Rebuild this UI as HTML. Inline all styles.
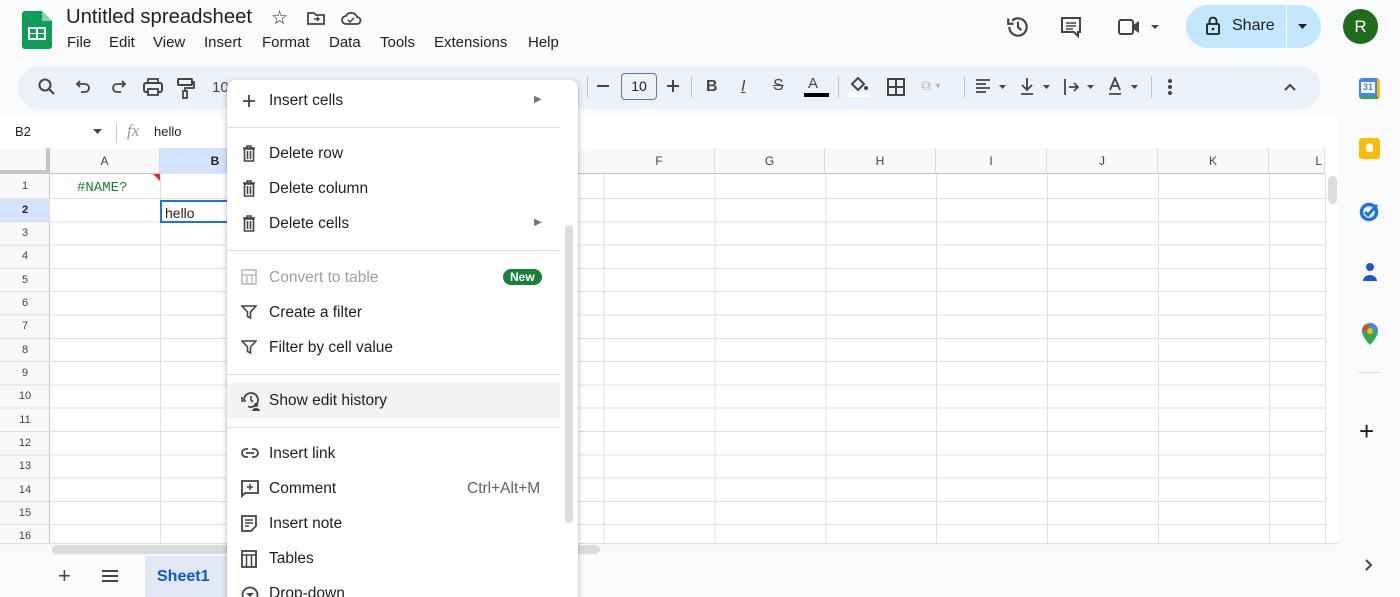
<!DOCTYPE html>
<html style="width:1400px;height:597px;overflow:hidden"><head><meta charset="utf-8"><style>
*{box-sizing:border-box;margin:0;padding:0}
body{width:1400px;height:597px;overflow:hidden;background:#f9fbfd;font-family:"Liberation Sans",Arial,sans-serif;position:relative;color:#1f1f1f}
.a{position:absolute}
.menu span{position:absolute;font-size:15.5px;color:#1f1f1f}
.ic{position:absolute;left:241px}
.col{position:absolute;top:148px;height:26px;font-size:12px;color:#444;text-align:center;line-height:26px;border-right:1px solid #dadce0}
.rn{position:absolute;left:0;width:50px;font-size:11px;color:#444;text-align:center}
</style></head><body>
<svg class="a" style="left:22px;top:11px" width="30" height="38" viewBox="0 0 30 38"><path d="M3 0h17l10 10v25a3 3 0 0 1-3 3H3a3 3 0 0 1-3-3V3a3 3 0 0 1 3-3z" fill="#0f9d58"/><path d="M20 0v10h10z" fill="#87ceac"/><rect x="6" y="16" width="18" height="13" fill="#fff"/><rect x="8" y="18" width="6" height="4" fill="#0f9d58"/><rect x="16" y="18" width="6" height="4" fill="#0f9d58"/><rect x="8" y="23" width="6" height="4" fill="#0f9d58"/><rect x="16" y="23" width="6" height="4" fill="#0f9d58"/></svg>
<div class="a" style="left:66px;top:6px;font-size:20.3px;color:#1f1f1f">Untitled spreadsheet</div>
<div class="a" style="left:271px;top:7px;font-size:19px">☆</div>
<svg class="a" style="left:306px;top:10px" width="20" height="16"><path d="M2 3h6l2 2h8v9H2z" fill="none" stroke="#444" stroke-width="1.8"/><path d="M8 9h5M11 7l2 2-2 2" stroke="#444" fill="none" stroke-width="1.5"/></svg>
<svg class="a" style="left:340px;top:10px" width="22" height="16"><path d="M6 14a4 4 0 0 1 0-8 6 6 0 0 1 11 1 3.5 3.5 0 0 1 0 7z" fill="none" stroke="#444" stroke-width="1.8"/><path d="M8 10l2 2 4-4" stroke="#444" fill="none" stroke-width="1.5"/></svg>
<div class="a" style="left:67px;top:34px;font-size:15px;word-spacing:0">
<span class="a" style="left:0">File</span><span class="a" style="left:42px">Edit</span><span class="a" style="left:86px">View</span><span class="a" style="left:137px">Insert</span><span class="a" style="left:195px">Format</span><span class="a" style="left:262px">Data</span><span class="a" style="left:313px">Tools</span><span class="a" style="left:367px">Extensions</span><span class="a" style="left:461px">Help</span></div>
<svg class="a" style="left:1005px;top:14px" width="26" height="26" viewBox="0 0 24 24"><path d="M4 12a8 8 0 1 0 2.5-5.8" fill="none" stroke="#444" stroke-width="2"/><path d="M3 4v5h5" fill="none" stroke="#444" stroke-width="2"/><path d="M12 7v5l3 3" fill="none" stroke="#444" stroke-width="2"/></svg>
<svg class="a" style="left:1059px;top:15px" width="24" height="24" viewBox="0 0 24 24"><path d="M3 3h18v14h-2v4l-4-4H3z" fill="none" stroke="#444" stroke-width="2"/><path d="M7 8h10M7 11h10M7 14h7" stroke="#444" stroke-width="1.6"/></svg>
<svg class="a" style="left:1117px;top:16px" width="46" height="22"><rect x="2" y="4" width="14" height="14" rx="2" fill="none" stroke="#444" stroke-width="2"/><path d="M16 9l6-4v12l-6-4z" fill="#444"/><path d="M34 9h8l-4 4z" fill="#444"/></svg>
<div class="a" style="left:1186px;top:5px;width:135px;height:43px;border-radius:22px;background:#c2e7ff"></div>
<div class="a" style="left:1286px;top:5px;width:1px;height:43px;background:#f9fbfd"></div>
<svg class="a" style="left:1204px;top:16px" width="18" height="20"><rect x="3" y="8" width="12" height="10" rx="1" fill="none" stroke="#1f1f1f" stroke-width="1.8"/><path d="M5.5 8V5a3.5 3.5 0 0 1 7 0v3" fill="none" stroke="#1f1f1f" stroke-width="1.8"/><circle cx="9" cy="13" r="1.3" fill="#1f1f1f"/></svg>
<div class="a" style="left:1232px;top:17px;font-size:16px;color:#1f1f1f">Share</div>
<svg class="a" style="left:1297px;top:23px" width="12" height="8"><path d="M1 1h9l-4.5 5z" fill="#1f1f1f"/></svg>
<div class="a" style="left:1343px;top:9px;width:35px;height:35px;border-radius:50%;background:#1e6b1c;color:#fff;font-size:17px;text-align:center;line-height:35px">R</div>
<div class="a" style="left:18px;top:66px;width:1303px;height:43px;border-radius:22px;background:#edf2fa"></div>
<svg class="a" style="left:37px;top:77px" width="20" height="20"><circle cx="8" cy="8" r="5.5" fill="none" stroke="#444" stroke-width="2"/><path d="M12 12l5 5" stroke="#444" stroke-width="2"/></svg>
<svg class="a" style="left:75px;top:79px" width="18" height="16"><path d="M5 2L2 5l3 3M2 5h8a4 4 0 0 1 0 8H6" fill="none" stroke="#444" stroke-width="1.8"/></svg>
<svg class="a" style="left:109px;top:79px" width="18" height="16"><path d="M13 2l3 3-3 3M16 5H8a4 4 0 0 0 0 8h4" fill="none" stroke="#444" stroke-width="1.8"/></svg>
<svg class="a" style="left:142px;top:77px" width="22" height="20"><rect x="2" y="6" width="18" height="9" rx="2" fill="none" stroke="#444" stroke-width="2"/><rect x="6" y="2" width="10" height="4" fill="none" stroke="#444" stroke-width="1.8"/><rect x="6" y="12" width="10" height="6" fill="#edf2fa" stroke="#444" stroke-width="1.8"/></svg>
<svg class="a" style="left:176px;top:77px" width="20" height="22"><rect x="2" y="2" width="14" height="6" rx="1" fill="none" stroke="#444" stroke-width="2"/><path d="M16 5h2v6H9v3" fill="none" stroke="#444" stroke-width="1.8"/><rect x="7" y="14" width="4" height="7" fill="none" stroke="#444" stroke-width="1.8"/></svg>
<div class="a" style="left:212px;top:79px;font-size:15px;color:#444">10</div>
<div class="a" style="left:587px;top:76px;width:1px;height:22px;background:#c7c7c7"></div>
<div class="a" style="left:597px;top:85px;width:12px;height:2px;background:#444"></div>
<div class="a" style="left:621px;top:73px;width:36px;height:27px;border:1px solid #747775;border-radius:4px;font-size:14px;text-align:center;line-height:25px;color:#1f1f1f">10</div>
<div class="a" style="left:667px;top:85px;width:12px;height:2px;background:#444"></div>
<div class="a" style="left:672px;top:80px;width:2px;height:12px;background:#444"></div>
<div class="a" style="left:691px;top:76px;width:1px;height:22px;background:#c7c7c7"></div>
<div class="a" style="left:706px;top:78px;font-size:16px;font-weight:bold;color:#444">B</div>
<div class="a" style="left:741px;top:78px;font-size:16px;font-style:italic;color:#444;text-decoration:underline">I</div>
<div class="a" style="left:773px;top:77px;font-size:16px;color:#444;text-decoration:line-through">S</div>
<div class="a" style="left:808px;top:75px;font-size:15px;color:#444">A</div>
<div class="a" style="left:804px;top:93px;width:25px;height:4px;background:#000"></div>
<div class="a" style="left:838px;top:76px;width:1px;height:22px;background:#c7c7c7"></div>
<svg class="a" style="left:849px;top:76px" width="20" height="16"><path d="M3 8l6-6 6 6-6 6z" fill="none" stroke="#444" stroke-width="2"/><circle cx="17" cy="12" r="2" fill="#444"/></svg>
<div class="a" style="left:847px;top:93px;width:23px;height:4px;background:#fff"></div>
<svg class="a" style="left:887px;top:78px" width="18" height="18"><rect x="1" y="1" width="16" height="16" fill="none" stroke="#444" stroke-width="2"/><path d="M9 1v16M1 9h16" stroke="#444" stroke-width="2"/></svg>
<div class="a" style="left:921px;top:77px;font-size:14px;color:#bbb">⧉ ▾</div>
<div class="a" style="left:964px;top:76px;width:1px;height:22px;background:#c7c7c7"></div>
<svg class="a" style="left:975px;top:78px" width="36" height="18"><path d="M1 2h14M1 6h10M1 10h14M1 14h10" stroke="#444" stroke-width="1.8"/><path d="M24 7h7l-3.5 4z" fill="#444"/></svg>
<svg class="a" style="left:1019px;top:77px" width="36" height="20"><path d="M8 1v12M3 8l5 5 5-5M2 17h12" fill="none" stroke="#444" stroke-width="1.8"/><path d="M24 8h7l-3.5 4z" fill="#444"/></svg>
<svg class="a" style="left:1063px;top:77px" width="36" height="20"><path d="M2 2v16M6 10h9M11 6l4 4-4 4" fill="none" stroke="#444" stroke-width="1.8"/><path d="M24 8h7l-3.5 4z" fill="#444"/></svg>
<svg class="a" style="left:1107px;top:77px" width="36" height="20"><path d="M3 13L8 1l5 12M5 9h6M2 17h12" fill="none" stroke="#444" stroke-width="1.8"/><path d="M24 8h7l-3.5 4z" fill="#444"/></svg>
<div class="a" style="left:1151px;top:76px;width:1px;height:22px;background:#c7c7c7"></div>
<svg class="a" style="left:1167px;top:78px" width="6" height="18"><circle cx="3" cy="3" r="2" fill="#444"/><circle cx="3" cy="9" r="2" fill="#444"/><circle cx="3" cy="15" r="2" fill="#444"/></svg>
<svg class="a" style="left:1283px;top:82px" width="14" height="10"><path d="M2 8l5-5 5 5" fill="none" stroke="#444" stroke-width="2"/></svg>
<div class="a" style="left:0;top:118px;width:1338px;height:29px;background:#fff"></div>
<div class="a" style="left:15px;top:124px;font-size:13px">B2</div>
<svg class="a" style="left:93px;top:129px" width="10" height="6"><path d="M0 0h9l-4.5 5z" fill="#444"/></svg>
<div class="a" style="left:116px;top:123px;width:1px;height:20px;background:#c7c7c7"></div>
<div class="a" style="left:127px;top:121px;font-size:17px;font-style:italic;color:#999;font-family:'Liberation Serif',serif">fx</div>
<div class="a" style="left:154px;top:124px;font-size:13px">hello</div>
<div class="a" style="left:0;top:147px;width:1338px;height:397px;background:#fff"></div>
<div class="a" style="left:0;top:148px;width:1325px;height:26px;background:#f8f9fa;border-bottom:1px solid #c4c7c5"></div>
<div class="a" style="left:160px;top:148px;width:111px;height:26px;background:#d3e3fd"></div>
<div class="a" style="left:0;top:174px;width:50px;height:370px;background:#f8f9fa;border-right:1px solid #c4c7c5"></div>
<div class="a" style="left:0;top:199px;width:50px;height:23px;background:#d3e3fd"></div>
<div class="a" style="left:0;top:148px;width:50px;height:26px;border-right:4px solid #c4c7c5;border-bottom:4px solid #c4c7c5"></div>
<div class="a" style="left:50px;top:174px;width:1275px;height:369px;background-image:repeating-linear-gradient(90deg,transparent 0,transparent 109.9px,#e1e1e1 109.9px,#e1e1e1 110.9px),linear-gradient(#fff,#fff)"></div>
<div class="a" style="left:0;top:174px;width:1325px;height:369px;background:repeating-linear-gradient(180deg,transparent 0,transparent 24px,#e1e1e1 24px,#e1e1e1 25px) 0 0/100% 25px no-repeat,repeating-linear-gradient(180deg,transparent 0,transparent 22.3px,#e1e1e1 22.3px,#e1e1e1 23.3px) 0 25px/100% 344px no-repeat"></div>
<div class="col" style="left:50px;width:110px">A</div>
<div class="col" style="left:160px;width:111px;font-weight:bold;color:#1f1f1f">B</div>
<div class="col" style="left:604px;width:111px">F</div>
<div class="col" style="left:715px;width:110px">G</div>
<div class="col" style="left:825px;width:111px">H</div>
<div class="col" style="left:936px;width:111px">I</div>
<div class="col" style="left:1047px;width:111px">J</div>
<div class="col" style="left:1158px;width:111px">K</div>
<div class="col" style="left:1269px;width:56px;text-align:right;padding-right:2px">L</div>
<div class="rn" style="top:180px">1</div>
<div class="rn" style="top:204px;font-weight:bold;color:#1f1f1f">2</div>
<div class="rn" style="top:227px">3</div><div class="rn" style="top:250px">4</div><div class="rn" style="top:274px">5</div><div class="rn" style="top:297px">6</div><div class="rn" style="top:320px">7</div><div class="rn" style="top:344px">8</div><div class="rn" style="top:367px">9</div><div class="rn" style="top:390px">10</div><div class="rn" style="top:414px">11</div><div class="rn" style="top:437px">12</div><div class="rn" style="top:460px">13</div><div class="rn" style="top:484px">14</div><div class="rn" style="top:507px">15</div><div class="rn" style="top:530px">16</div>
<div class="a" style="left:77px;top:180px;font-size:14px;color:#188038;font-family:'Liberation Mono',monospace">#NAME?</div>
<svg class="a" style="left:153px;top:174px" width="7" height="7"><path d="M0 0h7v7z" fill="#d93025"/></svg>
<div class="a" style="left:160px;top:200px;width:80px;height:23px;border:2px solid #1a73e8;border-right:none;font-size:14px;padding:3px 0 0 3px">hello</div>
<div class="a" style="left:1325px;top:174px;width:13px;height:369px;background:#fff;border-left:1px solid #e1e1e1"></div>
<div class="a" style="left:1328px;top:176px;width:9px;height:28px;border-radius:5px;background:#dadce0"></div>
<div class="a" style="left:0;top:543px;width:1338px;height:13px;background:#f8f9fa;border-top:1px solid #e1e1e1"></div>
<div class="a" style="left:52px;top:545px;width:548px;height:9px;border-radius:5px;background:#dadce0"></div>
<div class="a" style="left:58px;top:563px;font-size:22px;color:#444">+</div>
<svg class="a" style="left:101px;top:569px" width="18" height="14"><path d="M1 2h16M1 7h16M1 12h16" stroke="#444" stroke-width="2"/></svg>
<div class="a" style="left:145px;top:556px;width:90px;height:41px;background:#e1e9f7"></div>
<div class="a" style="left:157px;top:568px;font-size:16px;font-weight:bold;color:#0b57d0">Sheet1</div>
<div class="a" style="left:1359px;top:78px;width:21px;height:21px;border-radius:3px;background:#4285f4;border-bottom:3px solid #34a853;border-right:3px solid #fbbc04"><div style="margin:4px 2px;height:11px;background:#fff;font-size:9px;color:#4285f4;text-align:center;font-weight:bold">31</div></div>
<div class="a" style="left:1359px;top:138px;width:21px;height:21px;border-radius:3px;background:#fbbc04"><div style="margin:5px 7px;width:7px;height:9px;border-radius:4px 4px 2px 2px;background:#fff"></div></div>
<svg class="a" style="left:1358px;top:199px" width="24" height="24"><circle cx="11" cy="13" r="7.5" fill="none" stroke="#1a73e8" stroke-width="3.5"/><path d="M7 13l3 3 9-10" fill="none" stroke="#1a73e8" stroke-width="3"/></svg>
<svg class="a" style="left:1360px;top:261px" width="20" height="22"><circle cx="10" cy="6" r="4" fill="#1a56db"/><path d="M3 20a7 6 0 0 1 14 0z" fill="#1a56db"/></svg>
<svg class="a" style="left:1361px;top:322px" width="18" height="24"><path d="M9 1a8 8 0 0 0-8 8c0 6 8 14 8 14s8-8 8-14a8 8 0 0 0-8-8z" fill="#34a853"/><path d="M9 1a8 8 0 0 1 8 8l-8 0z" fill="#4285f4"/><path d="M1 9a8 8 0 0 1 4-7l4 7z" fill="#ea4335"/><circle cx="9" cy="9" r="3" fill="#fbbc04"/></svg>
<div class="a" style="left:1358px;top:372px;width:22px;height:1px;background:#dadce0"></div>
<div class="a" style="left:1359px;top:416px;font-size:26px;color:#1f1f1f;font-weight:300">+</div>
<svg class="a" style="left:1364px;top:558px" width="10" height="14"><path d="M2 2l5 5-5 5" fill="none" stroke="#444" stroke-width="2"/></svg>
<div class="a" style="left:227px;top:80px;width:351px;height:517px;background:#fff;border-radius:8px 8px 0 0;box-shadow:0 2px 6px 2px rgba(60,64,67,.15),0 1px 2px rgba(60,64,67,.3)"></div>
<div class="a" style="left:227px;top:383px;width:333px;height:35px;background:#f1f3f4"></div>
<div class="a" style="left:565px;top:225px;width:8px;height:298px;border-radius:4px;background:#dadce0"></div>
<div class="a" style="left:227px;top:127px;width:333px;height:1px;background:#e0e0e0"></div>
<div class="a" style="left:227px;top:250px;width:333px;height:1px;background:#e0e0e0"></div>
<div class="a" style="left:227px;top:374px;width:333px;height:1px;background:#e0e0e0"></div>
<div class="a" style="left:227px;top:427px;width:333px;height:1px;background:#e0e0e0"></div>
<div class="menu">
<span style="left:269px;top:92px">Insert cells</span><span style="left:534px;top:94px;font-size:10px;color:#777">▶</span>
<span style="left:269px;top:145px">Delete row</span>
<span style="left:269px;top:180px">Delete column</span>
<span style="left:269px;top:215px">Delete cells</span><span style="left:534px;top:217px;font-size:10px;color:#777">▶</span>
<span style="left:269px;top:269px;color:#9aa0a6">Convert to table</span>
<span style="left:503px;top:269px;background:#188038;color:#fff;font-size:12px;font-weight:bold;border-radius:9px;padding:1px 7px">New</span>
<span style="left:269px;top:304px">Create a filter</span>
<span style="left:269px;top:339px">Filter by cell value</span>
<span style="left:269px;top:392px">Show edit history</span>
<span style="left:269px;top:445px">Insert link</span>
<span style="left:269px;top:480px">Comment</span><span style="left:467px;top:480px;color:#5f6368">Ctrl+Alt+M</span>
<span style="left:269px;top:515px">Insert note</span>
<span style="left:269px;top:550px">Tables</span>
<span style="left:269px;top:585px">Drop-down</span>
</div>
<svg class="ic" style="top:93px" width="16" height="16"><path d="M8 2v12M2 8h12" stroke="#444" stroke-width="1.8"/></svg>
<svg class="ic" style="top:145px" width="16" height="18"><path d="M2 3h12M6 3V1h4v2M3.5 4h9v12h-9zM6.5 6v8M9.5 6v8" fill="none" stroke="#444" stroke-width="1.6"/></svg>
<svg class="ic" style="top:180px" width="16" height="18"><path d="M2 3h12M6 3V1h4v2M3.5 4h9v12h-9zM6.5 6v8M9.5 6v8" fill="none" stroke="#444" stroke-width="1.6"/></svg>
<svg class="ic" style="top:215px" width="16" height="18"><path d="M2 3h12M6 3V1h4v2M3.5 4h9v12h-9zM6.5 6v8M9.5 6v8" fill="none" stroke="#444" stroke-width="1.6"/></svg>
<svg class="ic" style="top:269px" width="16" height="16"><rect x="1" y="1" width="14" height="14" fill="none" stroke="#bbb" stroke-width="1.6"/><path d="M1 6h14M6 6v9M11 6v9" stroke="#bbb" stroke-width="1.4"/></svg>
<svg class="ic" style="top:304px" width="16" height="16"><path d="M1 2h14l-5.5 6v6l-3-1.5V8z" fill="none" stroke="#444" stroke-width="1.6"/></svg>
<svg class="ic" style="top:339px" width="16" height="16"><path d="M1 2h14l-5.5 6v6l-3-1.5V8z" fill="none" stroke="#444" stroke-width="1.6"/></svg>
<svg class="ic" style="top:391px" width="22" height="20"><path d="M3 9a7 7 0 1 1 4 6.3" fill="none" stroke="#444" stroke-width="1.8"/><path d="M1 6v4h4" fill="none" stroke="#444" stroke-width="1.6"/><path d="M10 5v4l2 2" fill="none" stroke="#444" stroke-width="1.6"/><circle cx="15" cy="14" r="2" fill="#444"/><path d="M11 20a4 3 0 0 1 8 0z" fill="#444"/></svg>
<svg class="ic" style="top:447px" width="18" height="12"><path d="M7 2H5a4 4 0 0 0 0 8h2M11 2h2a4 4 0 0 1 0 8h-2M5 6h8" fill="none" stroke="#444" stroke-width="1.8"/></svg>
<svg class="ic" style="top:480px" width="18" height="18"><path d="M1 1h16v12H4l-3 3z" fill="none" stroke="#444" stroke-width="1.8"/><path d="M9 4v6M6 7h6" stroke="#444" stroke-width="1.6"/></svg>
<svg class="ic" style="top:515px" width="16" height="18"><path d="M1 1h14v10l-5 5H1z" fill="none" stroke="#444" stroke-width="1.8"/><path d="M4 5h8M4 8h8M4 11h4" stroke="#444" stroke-width="1.5"/></svg>
<svg class="ic" style="top:550px" width="16" height="18"><rect x="1" y="1" width="14" height="16" fill="none" stroke="#444" stroke-width="1.8"/><path d="M1 5h14M5.5 5v12M10.5 5v12" stroke="#444" stroke-width="1.5"/></svg>
<svg class="ic" style="top:586px" width="18" height="18"><circle cx="9" cy="9" r="7.5" fill="none" stroke="#444" stroke-width="1.8"/><path d="M5 7h8l-4 4z" fill="#444"/></svg>
</body></html>
